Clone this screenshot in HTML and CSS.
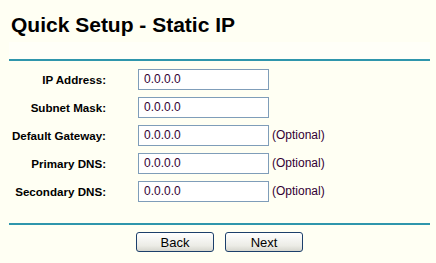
FILE: index.html
```html
<!DOCTYPE html>
<html lang="en">
<head>
    <meta charset="UTF-8">
    <title>Quick Setup - Static IP</title>
    <link rel="stylesheet" href="styles.css">
</head>
<body>
    <div class="page">
        <h1 class="title">Quick Setup - Static IP</h1>
        <div class="band"></div>
        <div class="rule"></div>
        <form class="setup-form">
            <label class="field-label" for="ip">IP Address:</label>
            <input class="field" id="ip" type="text" value="0.0.0.0">
            <span class="note"></span>

            <label class="field-label" for="mask">Subnet Mask:</label>
            <input class="field" id="mask" type="text" value="0.0.0.0">
            <span class="note"></span>

            <label class="field-label" for="gateway">Default Gateway:</label>
            <input class="field" id="gateway" type="text" value="0.0.0.0">
            <span class="note">(Optional)</span>

            <label class="field-label" for="dns1">Primary DNS:</label>
            <input class="field" id="dns1" type="text" value="0.0.0.0">
            <span class="note">(Optional)</span>

            <label class="field-label" for="dns2">Secondary DNS:</label>
            <input class="field" id="dns2" type="text" value="0.0.0.0">
            <span class="note">(Optional)</span>
        </form>
        <div class="rule rule-bottom"></div>
        <div class="button-row">
            <button class="button" type="button">Back</button>
            <button class="button" type="button">Next</button>
        </div>
    </div>
</body>
</html>
```

FILE: styles.css
```css
body, html {
    margin: 0;
    background-color: #FFFFF3;
    font-family: "Liberation Sans", Arial, sans-serif;
    color: #000000;
}
.page {
    padding: 0 6px 0 9px;
}
.title {
    margin: 13px 0 5px 2px;
    font-size: 21px;
    line-height: 24px;
    font-weight: bold;
}
.band {
    height: 17px;
    background-color: #FFFFF8;
}
.rule {
    height: 2px;
    background-color: #2F96AC;
}
.setup-form {
    display: grid;
    grid-template-columns: 97px 131px auto;
    grid-auto-rows: 28px;
    column-gap: 32px;
    align-items: center;
    padding-top: 4px;
    margin-bottom: 18px;
}
.setup-form .note {
    margin-left: -29px;
}
.field-label {
    text-align: right;
    white-space: nowrap;
    font-size: 11.6px;
    font-weight: bold;
}
.field {
    box-sizing: border-box;
    width: 131px;
    height: 21px;
    margin: 0;
    padding: 0 0 0 5px;
    border: 1px solid #7F9DB9;
    background-color: #FFFFFF;
    font-family: "Liberation Sans", Arial, sans-serif;
    font-size: 12px;
    color: #330033;
}
.note {
    font-size: 12px;
    color: #330033;
}
.button-row {
    display: flex;
    justify-content: center;
    gap: 11px;
    margin-top: 7px;
}
.button {
    width: 78px;
    height: 20px;
    padding: 0;
    border: 1px solid #1C3F6B;
    border-radius: 3px;
    background: linear-gradient(#FFFFFF, #ECECE6 70%, #D6D6CE);
    font-family: "Liberation Sans", Arial, sans-serif;
    font-size: 13px;
    color: #000000;
}
```
